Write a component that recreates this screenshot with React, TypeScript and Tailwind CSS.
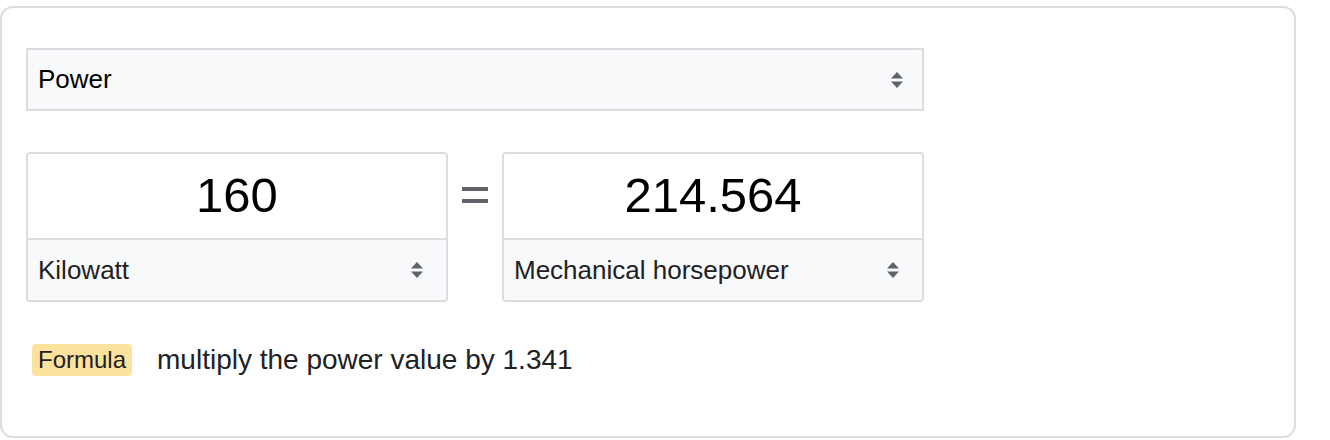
import React from "react";

function Arrows({ className = "" }: { className?: string }) {
  return (
    <svg width="14" height="20" viewBox="0 0 14 20" className={className}>
      <path d="M1 8.5 L7 2 L13 8.5 Z" fill="#5f6368" />
      <path d="M1 11.5 L7 18 L13 11.5 Z" fill="#5f6368" />
    </svg>
  );
}

function UnitBox({ value, unit }: { value: string; unit: string }) {
  return (
    <div className="w-[422px] h-[150px] border-2 border-[#dadce0] rounded-[4px] flex flex-col overflow-hidden">
      <div className="h-[84px] bg-white flex items-center justify-center text-[49px] text-black leading-none pb-[2px]">
        {value}
      </div>
      <div className="flex-1 border-t-2 border-[#dadce0] bg-[#f8f9fa] flex items-center justify-between pl-[10px] pr-[22px] text-[26px] text-[#202124]">
        <span>{unit}</span>
        <Arrows />
      </div>
    </div>
  );
}

export default function App() {
  return (
    <div className="bg-white w-[1330px] h-[440px] pt-[6px]" style={{ fontFamily: '"Liberation Sans", Arial, sans-serif' }}>
      <div className="w-[1296px] h-[432px] border-2 border-[#dadce0] rounded-[13px] pl-[24px] pt-[40px]">
        <div className="w-[898px] h-[63px] border-2 border-[#dadce0] bg-[#f8f9fa] flex items-center justify-between pl-[10px] pr-[18px] text-[26px] text-black">
          <span>Power</span>
          <Arrows />
        </div>
        <div className="mt-[41px] flex items-start">
          <UnitBox value="160" unit="Kilowatt" />
          <div className="w-[54px] flex flex-col items-center gap-[8px] mt-[35px]">
            <div className="w-[26px] h-[4px] bg-[#5f6368]" />
            <div className="w-[26px] h-[4px] bg-[#5f6368]" />
          </div>
          <UnitBox value="214.564" unit="Mechanical horsepower" />
        </div>
        <div className="mt-[37px] flex items-center pl-[6px]">
          <span className="bg-[#fce29c] rounded-[4px] px-[6px] h-[32px] flex items-center text-[24px] text-[#202124]">
            Formula
          </span>
          <span className="ml-[25px] text-[28px] text-[#202124]">multiply the power value by 1.341</span>
        </div>
      </div>
    </div>
  );
}
